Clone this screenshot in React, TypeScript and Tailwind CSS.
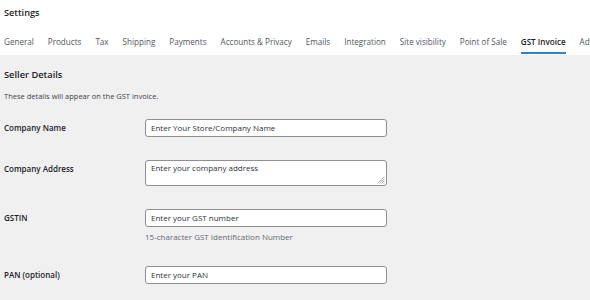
import React from "react";

const tabs = [
  "General",
  "Products",
  "Tax",
  "Shipping",
  "Payments",
  "Accounts & Privacy",
  "Emails",
  "Integration",
  "Site visibility",
  "Point of Sale",
  "GST Invoice",
  "Advanced",
];

function Input({ placeholder }: { placeholder: string }) {
  return (
    <div className="w-[242px] h-[18px] bg-white border border-[#8c8f94] rounded-[3px] flex items-center px-[5px] text-[8px] text-[#2c3338] leading-none">
      {placeholder}
    </div>
  );
}

function Label({ children }: { children: React.ReactNode }) {
  return (
    <div className="w-[141px] h-[18px] flex items-center text-[8px] font-semibold text-[#1d2327] shrink-0">
      {children}
    </div>
  );
}

export default function App() {
  return (
    <div className="w-[590px] h-[300px] overflow-hidden bg-[#f0f0f1] text-[#1d2327] font-['Open_Sans','Noto_Sans',sans-serif]">
      <header className="bg-white h-[55px] px-[4px] flex flex-col">
        <div className="h-[26px] flex items-center text-[9.2px] font-semibold text-[#1d2327]">
          Settings
        </div>
        <nav className="flex gap-[14px] whitespace-nowrap text-[8.1px] text-[#50575e] mt-[8px]">
          {tabs.map((t) => {
            const active = t === "GST Invoice";
            return (
              <div key={t} className="relative h-[21px] shrink-0">
                <div className={"h-[16px] flex items-center " + (active ? "text-[#1d2327] font-semibold" : "")}>
                  {t}
                </div>
                {active && (
                  <div className="absolute left-0 right-0 bottom-[1px] h-[2px] bg-[#3582c4]" />
                )}
              </div>
            );
          })}
        </nav>
      </header>

      <main className="px-[4px]">
        <h2 className="mt-[12px] h-[16px] flex items-center text-[9.3px] font-semibold">Seller Details</h2>
        <p className="mt-[8px] h-[12px] flex items-center text-[7.5px] text-[#3c434a]">
          These details will appear on the GST invoice.
        </p>

        <div className="mt-[16px] flex flex-col">
          <div className="flex items-start">
            <Label>Company Name</Label>
            <Input placeholder="Enter Your Store/Company Name" />
          </div>

          <div className="flex items-start mt-[23px]">
            <Label>Company Address</Label>
            <div className="relative w-[242px] h-[26px] bg-white border border-[#8c8f94] rounded-[3px] px-[5px] pt-[2px] text-[8px] leading-[10px] text-[#2c3338]">
              Enter your company address
              <svg className="absolute right-[1px] bottom-[1px]" width="8" height="8" viewBox="0 0 8 8">
                <line x1="7.5" y1="0.5" x2="0.5" y2="7.5" stroke="#8c8f94" strokeWidth="0.7" />
                <line x1="7.5" y1="2.5" x2="2.5" y2="7.5" stroke="#8c8f94" strokeWidth="0.7" />
                <line x1="7.5" y1="4.5" x2="4.5" y2="7.5" stroke="#8c8f94" strokeWidth="0.7" />
                <line x1="7.5" y1="6.5" x2="6.5" y2="7.5" stroke="#8c8f94" strokeWidth="0.7" />
              </svg>
            </div>
          </div>

          <div className="flex items-start mt-[23px]">
            <Label>GSTIN</Label>
            <div className="flex flex-col">
              <Input placeholder="Enter your GST number" />
              <div className="mt-[4px] h-[12px] flex items-center text-[8px] text-[#646970]">
                15-character GST Identification Number
              </div>
            </div>
          </div>

          <div className="flex items-start mt-[23px]">
            <Label>PAN (optional)</Label>
            <Input placeholder="Enter your PAN" />
          </div>
        </div>
      </main>
    </div>
  );
}
